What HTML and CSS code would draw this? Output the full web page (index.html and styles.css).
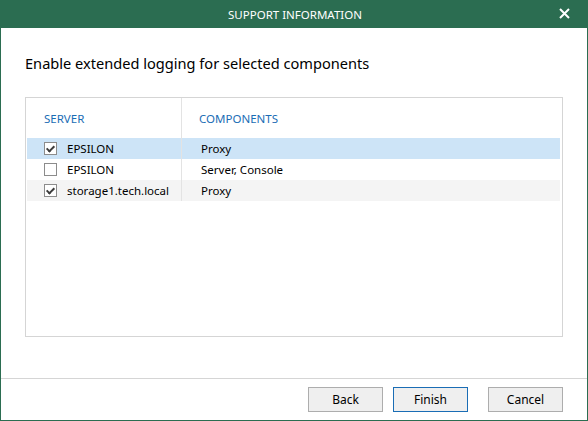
FILE: index.html
```html
<!DOCTYPE html>
<html lang="en">
<head>
  <meta charset="UTF-8" />
  <title>Support Information</title>
  <link rel="stylesheet" href="styles.css">
</head>
<body>
  <div class="window">
    <div class="titlebar">
      <span class="title">SUPPORT INFORMATION</span>
      <span class="close">
        <svg width="11" height="11" viewBox="0 0 11 11">
          <path d="M1 1 L10 10 M10 1 L1 10" stroke="#fff" stroke-width="2"/>
        </svg>
      </span>
    </div>

    <div class="content">
      <h1>Enable extended logging for selected components</h1>

      <div class="grid-box">
        <div class="row head">
          <div class="cell first">SERVER</div>
          <div class="cell">COMPONENTS</div>
        </div>
        <div class="row selected">
          <div class="cell first"><span class="check on"></span>EPSILON</div>
          <div class="cell">Proxy</div>
        </div>
        <div class="row">
          <div class="cell first"><span class="check"></span>EPSILON</div>
          <div class="cell">Server, Console</div>
        </div>
        <div class="row alt">
          <div class="cell first"><span class="check on"></span>storage1.tech.local</div>
          <div class="cell">Proxy</div>
        </div>
      </div>
    </div>

    <div class="footer">
      <button class="btn">Back</button>
      <button class="btn btn-default">Finish</button>
      <button class="btn btn-cancel">Cancel</button>
    </div>
  </div>
</body>
</html>
```

FILE: styles.css
```css
body {
  margin: 0;
  font-family: 'Noto Sans', sans-serif;
  color: #000;
  background: #fff;
}

.window {
  width: 588px;
  height: 421px;
  box-sizing: border-box;
  border: 1px solid #2b6d51;
  border-top: none;
  display: flex;
  flex-direction: column;
}

.titlebar {
  height: 28px;
  margin: 0 -1px;
  background: #2b6d51;
  color: #fff;
  display: flex;
  align-items: center;
  justify-content: center;
  position: relative;
}

.title {
  font-size: 11.5px;
  margin-left: 2px;
}

.close {
  position: absolute;
  right: 18px;
  top: 8px;
  width: 11px;
  height: 11px;
  display: flex;
}

.content {
  flex: 1;
  padding: 0 24px;
}

h1 {
  font-size: 14.6px;
  font-weight: normal;
  margin: 25px 0 0 0;
  height: 44px;
  line-height: 20px;
}

.grid-box {
  height: 240px;
  box-sizing: border-box;
  border: 1px solid #d5d5d5;
  padding: 0 2px 0 1px;
}

.row {
  display: grid;
  grid-template-columns: 155px 1fr;
  height: 21px;
  font-size: 11.5px;
}

.row .cell {
  display: flex;
  align-items: center;
  padding-left: 19px;
}

.row .cell.first {
  border-right: 1px solid #e3e3e3;
  padding-left: 17px;
}

.row.head {
  height: 40px;
}

.row.head .cell {
  color: #1a6db5;
  padding-left: 17px;
  padding-top: 1px;
}

.row.selected {
  background: #cde4f7;
}

.row.alt {
  background: #f4f4f4;
}

.check {
  width: 11px;
  height: 11px;
  border: 1px solid #8c8c8c;
  background: #fff;
  margin-right: 10px;
  position: relative;
}

.check.on::after {
  content: "";
  position: absolute;
  left: 3px;
  top: 1px;
  width: 3px;
  height: 6px;
  border: solid #3c3c3c;
  border-width: 0 2px 2px 0;
  transform: rotate(45deg);
}

.footer {
  height: 42px;
  border-top: 1px solid #d5d5d5;
  display: flex;
  justify-content: flex-end;
  align-items: flex-start;
  padding: 8px 24px 0 0;
  box-sizing: border-box;
}

.btn {
  width: 75px;
  height: 25px;
  margin-left: 10px;
  background: #efefef;
  border: 1px solid #adadad;
  font-family: 'Noto Sans', sans-serif;
  font-size: 12px;
  color: #000;
  padding: 0;
}

.btn-default {
  border-color: #1a6db5;
}

.btn-cancel {
  margin-left: 20px;
}
```
